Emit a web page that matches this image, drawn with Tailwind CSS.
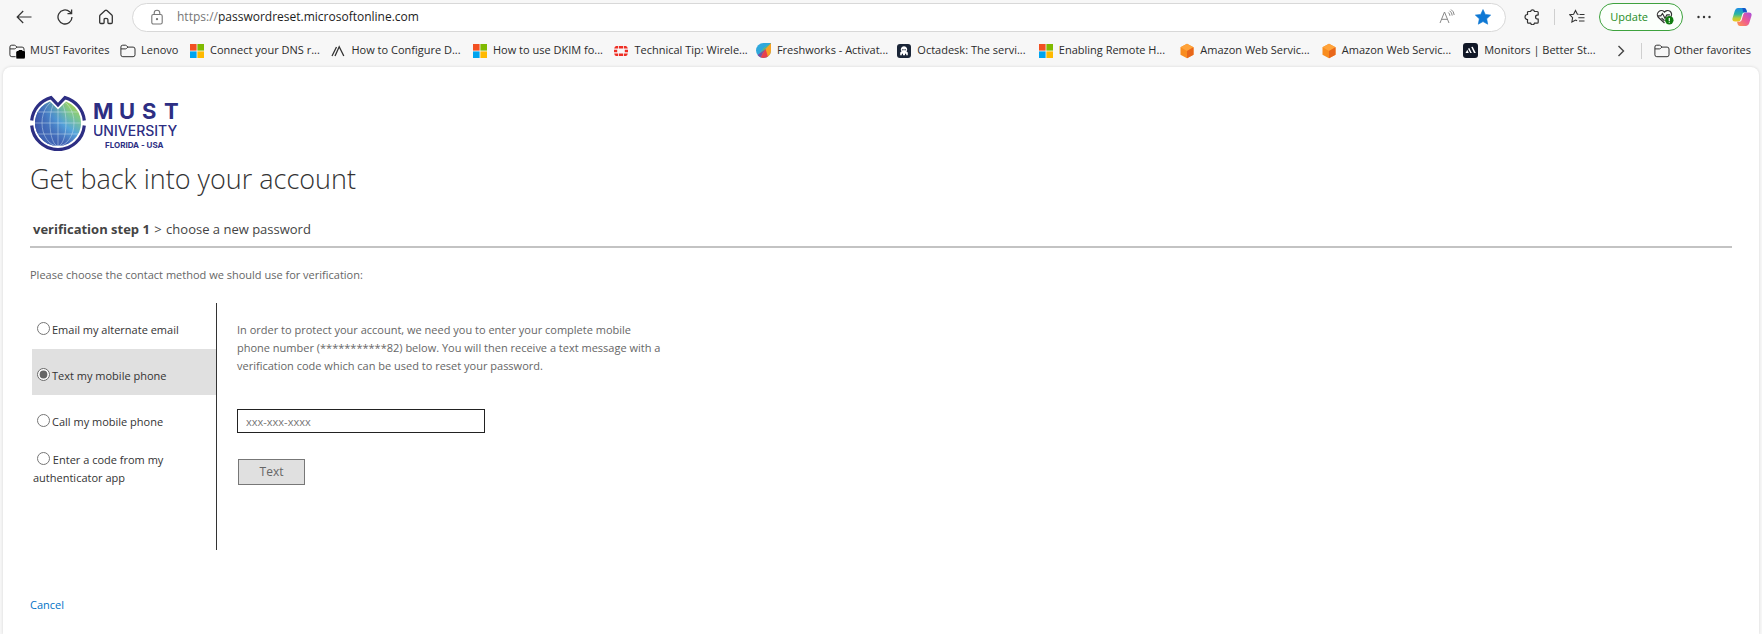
<!DOCTYPE html>
<html lang="en">
<head>
    <meta charset="UTF-8">
    <meta name="viewport" content="width=device-width, initial-scale=1.0">
    <title>Microsoft Online Password Reset</title>
    <script src="https://cdn.jsdelivr.net/npm/@tailwindcss/browser@4"></script>
</head>
<body class="flex min-h-screen flex-col bg-[#f7f7f7] font-['Open_Sans',sans-serif] text-[#2b2b2b]">

    <!-- Shared icons -->
    <svg class="hidden">
        <symbol id="windows" viewBox="0 0 14 14">
            <path fill="#f25022" d="M0 0h6.6v6.6H0z"/><path fill="#7fba00" d="M7.4 0H14v6.6H7.4z"/>
            <path fill="#00a4ef" d="M0 7.4h6.6V14H0z"/><path fill="#ffb900" d="M7.4 7.4H14V14H7.4z"/>
        </symbol>
        <symbol id="folder" viewBox="0 0 16 16">
            <path fill="none" stroke="#333" d="M.9 11.8V4Q.9 2.2 2.7 2.2h2.7q.8 0 1.3.6l1.2 1.3h5.2q1.9 0 1.9 1.9v5.8q0 1.9-1.9 1.9H2.8Q.9 13.7.9 11.8zM.9 5.9h4.5q.7 0 1.2-.5l1.3-1.3"/>
        </symbol>
        <symbol id="aws" viewBox="0 0 14 16">
            <path fill="#f98d1f" d="M7 .8l6.5 3.5v7.4L7 15.2.5 11.7V4.3z"/>
            <path fill="#ffa33a" d="M7 .8l6.5 3.5L7 7.9.5 4.3z"/>
            <path fill="#e8671b" d="M13.5 4.3v7.4L7 15.2V7.9z"/>
        </symbol>
    </svg>

    <!-- Toolbar -->
    <header class="flex h-[34px] items-center pl-4 pr-[10px]">
        <button class="flex w-4 justify-center" aria-label="Back">
            <svg class="h-4 w-4" viewBox="0 0 16 16" fill="none" stroke="#333" stroke-width="1.2"><path d="M15.5 8H1.2M7.2 2L1.2 8l6 6"/></svg>
        </button>
        <button class="ml-[25px] flex w-4 justify-center" aria-label="Refresh">
            <svg class="h-4 w-4" viewBox="0 0 16 16" fill="none" stroke="#333" stroke-width="1.3"><path d="M15 8a7 7 0 1 1-2.3-5.2L14.5 4.5M14.6.6v4.1h-4.1"/></svg>
        </button>
        <button class="ml-[25px] flex w-4 justify-center" aria-label="Home">
            <svg class="h-4 w-4" viewBox="0 0 16 16" fill="none" stroke="#333" stroke-width="1.3"><path d="M1.7 7.2Q1.7 6.5 2.2 6L7.1 1.6q.9-.8 1.8 0L13.8 6q.5.5.5 1.2v6q0 1.3-1.2 1.3h-2.3q-.9 0-.9-.9V10.5q0-1.2-1.9-1.2t-1.9 1.2v3.1q0 .9-.9.9H2.9q-1.2 0-1.2-1.3z"/></svg>
        </button>

        <div class="ml-[18px] flex h-[29px] min-w-0 flex-1 items-center rounded-full border border-[#d8d8d8] bg-white pl-4 pr-[14px]">
            <svg class="h-4 w-4 shrink-0" viewBox="0 0 16 16" fill="none" stroke="#777" stroke-width="1.1"><rect x="2.8" y="5.5" width="10.4" height="9.5" rx="1.6"/><path d="M5.2 5.5V4a2.8 2.8 0 0 1 5.6 0v1.5"/><circle cx="8" cy="10.2" r=".6" fill="#777"/></svg>
            <a href="#" class="ml-3 flex-1 text-[12px] text-[#1d1d1d]"><span class="text-[#777]">https://</span>passwordreset.microsoftonline.com</a>
            <button aria-label="Read aloud">
                <svg class="h-4 w-4" viewBox="0 0 16 16" fill="none" stroke="#888"><path d="M1 14L5.500 3 10 14M2.600 10.300h5.800M9.300 3.500q1.600 1.300 1.600 3.300M10.600 1.800q2.600 1.900 2.600 4.800M12 .5q3 2 3.200 5.500"/></svg>
            </button>
            <button class="ml-5" aria-label="Favorite">
                <svg class="h-4 w-4" viewBox="0 0 16 16" fill="#0f78d4"><path d="M8 .5l2.300 4.900 5.400.7-4 3.700 1 5.400L8 12.600l-4.700 2.600 1-5.400-4-3.700 5.400-.7z" stroke="#0f78d4" stroke-width=".6" stroke-linejoin="round"/></svg>
            </button>
        </div>

        <button class="ml-[18px]" aria-label="Extensions">
            <svg class="h-4 w-4" viewBox="0 0 16 16" fill="none" stroke="#333" stroke-width="1.2"><path d="M4 2.500h2.600a2 2 0 0 1 3.900 0h2.700q1 0 1 1v2.300q-2.700.1-2.700 2.200t2.700 2.200v3q0 1-1 1h-2.700a2 2 0 0 1-3.900 0H4.500q-1 0-1-1v-2.700a2.500 2.500 0 0 1 0-5V3.500q0-1 .9-1z"/></svg>
        </button>
        <div class="ml-[14px] h-4 w-px bg-[#cfcfcf]"></div>
        <button class="ml-[14px]" aria-label="Favorites">
            <svg class="h-4 w-4" viewBox="0 0 16 16" fill="none" stroke="#333" stroke-width="1.1"><path d="M9.500 5.500L8.300 5 6.500 1.500 4.600 5.200.8 5.800l2.800 2.900L2.900 13l3.700-2 1.500.8M10.500 5.500h5M9.300 8.700h6.200M10 12h5.500"/></svg>
        </button>
        <button class="ml-[14px] flex h-[28px] items-center gap-2 rounded-full border border-[#3ea23e] bg-[#fbfffb] pl-[10px] pr-2 text-[11px] text-[#258c25]">
            Update
            <svg class="h-4 w-[18px]" viewBox="0 0 18 16" fill="none" stroke="#333" stroke-width="1.2"><path d="M8.500 14L2.300 8.300a3.900 3.900 0 0 1 6.200-5.200 3.900 3.900 0 0 1 6.300 4.700M1.500 6.800h3.300l1.700-2.300 2.500 4.700 1.900-3.300h3M5.500 9l3 2.800"/><circle cx="13.300" cy="11.300" r="4.200" fill="#107c10" stroke="none"/><path stroke="#fff" d="M13.300 8.900v3M13.300 12.800v.9"/></svg>
        </button>
        <button class="ml-[13px]" aria-label="Settings and more">
            <svg class="h-4 w-4" viewBox="0 0 16 16" fill="#333"><circle cx="2.500" cy="8" r="1.200"/><circle cx="8" cy="8" r="1.200"/><circle cx="13.500" cy="8" r="1.200"/></svg>
        </button>
        <button class="ml-5" aria-label="Copilot">
            <svg class="h-5 w-5" viewBox="0 0 20 20">
                <defs>
                    <linearGradient id="cpA" x1="0" y1="0" x2="0" y2="1"><stop offset="0" stop-color="#1b8ce8"/><stop offset=".45" stop-color="#2bb6a0"/><stop offset=".75" stop-color="#b6cf3a"/><stop offset="1" stop-color="#f5c21b"/></linearGradient>
                    <linearGradient id="cpB" x1="1" y1="0" x2="0" y2="1"><stop offset="0" stop-color="#a64fe0"/><stop offset=".5" stop-color="#ee5a92"/><stop offset="1" stop-color="#ff9a4a"/></linearGradient>
                </defs>
                <path fill="url(#cpA)" d="M5.800 1h6.400q1.600 0 2.100 1.800l.7 2.400h-2.500q-1.700 0-2.200 1.800l-1.600 5.600q-.6 2-2.400 2H3Q-.4 14.600.6 11L2.800 3.700Q3.600 1 5.800 1z"/>
                <path fill="url(#cpB)" d="M14.200 19H7.800q-1.600 0-2.100-1.800L5 14.800h2.500q1.700 0 2.200-1.800l1.600-5.600q.6-2 2.400-2H17q3.400 0 2.400 3.600l-2.200 7.300q-.8 2.700-3 2.700z"/>
                <path fill="#1556c8" d="M10.300 1h1.900q1.600 0 2.100 1.800l.7 2.400h-2.500q-.7 0-1.200.4z"/>
            </svg>
        </button>
    </header>

    <!-- Favorites bar -->
    <nav class="flex h-[33px] items-center whitespace-nowrap pl-[9px] pr-[11px] text-[11px]">
        <a href="#" class="flex w-[111px] items-center gap-[5px]">
            <svg class="h-4 w-4" viewBox="0 0 16 16"><use href="#folder"/><path stroke="#f7f7f7" stroke-width=".8" d="M7 8.500h2V7h5v1.500h2V16H7z"/><path d="M10 8V7h3v1h2q1 0 1 1v5q0 1-1 1H8.500q-1 0-1-1V9q0-1 1-1z"/></svg>
            MUST Favorites
        </a>
        <a href="#" class="flex w-[70px] items-center gap-[5px]">
            <svg class="h-4 w-4"><use href="#folder"/></svg>
            Lenovo
        </a>
        <div class="grid flex-1 grid-cols-10">
            <a href="#" class="flex items-center gap-[6px]"><svg class="h-[14px] w-[14px]"><use href="#windows"/></svg>Connect your DNS r...</a>
            <a href="#" class="flex items-center gap-[6px]"><svg class="h-[14px] w-[14px]" viewBox="0 0 14 14" fill="none" stroke="#333" stroke-width="1.3"><path d="M1 12L5.500 3M4 12L8.200 2.800 12.800 12"/></svg>How to Configure D...</a>
            <a href="#" class="flex items-center gap-[6px]"><svg class="h-[14px] w-[14px]"><use href="#windows"/></svg>How to use DKIM fo...</a>
            <a href="#" class="flex items-center gap-[6px]"><svg class="h-[14px] w-[14px]" viewBox="0 0 14 14" fill="#ee2e24"><path d="M5 2h4v2.500H5zM5 9.500h4V12H5zM0 5.700h3.200v2.600H0zM10.800 5.700H14v2.600h-3.200zM2 2h2.200v2.500H.2Q.5 2.500 2 2zM12 2H9.800v2.500h4Q13.500 2.500 12 2zM2 12h2.200V9.500H.2Q.5 11.500 2 12zM12 12H9.800V9.500h4Q13.500 11.500 12 12z"/></svg>Technical Tip: Wirele...</a>
            <a href="#" class="flex items-center gap-[6px]">
                <svg class="h-[15px] w-[15px]" viewBox="0 0 14 14"><path fill="#2fa8dc" d="M7 0h7v7a7 7 0 1 1-7-7z"/><path fill="#f7a223" d="M14 0v7a7 7 0 0 1-4.500 6.500L4.500 10z"/><path fill="#7dc242" d="M14 0L3 10.500 7.500 5z"/><path fill="#e8404d" d="M9 5.500L4 13.300q4 1.500 7-.7z"/><path fill="#7d4fa0" d="M9 5.500L1.500 11.300Q2.500 12.800 4 13.300z"/></svg>
                Freshworks - Activat...
            </a>
            <a href="#" class="flex items-center gap-[6px]"><svg class="h-[14px] w-[14px]" viewBox="0 0 14 14"><rect width="14" height="14" rx="3" fill="#1b2638"/><path fill="#fff" d="M7 2.300a3.200 3.200 0 0 1 2.500 5.200l1.300 1v2.700H9.200V10L8 9.500v1.800H6V9.500L4.800 10v1.200H3.200V8.500l1.300-1A3.200 3.200 0 0 1 7 2.300z"/><circle cx="5.900" cy="5.700" r=".7" fill="#1b2638"/><circle cx="8.100" cy="5.700" r=".7" fill="#1b2638"/></svg>Octadesk: The servi...</a>
            <a href="#" class="flex items-center gap-[6px]"><svg class="h-[14px] w-[14px]"><use href="#windows"/></svg>Enabling Remote H...</a>
            <a href="#" class="flex items-center gap-[6px]"><svg class="h-4 w-[14px]"><use href="#aws"/></svg>Amazon Web Servic...</a>
            <a href="#" class="flex items-center gap-[6px]"><svg class="h-4 w-[14px]"><use href="#aws"/></svg>Amazon Web Servic...</a>
            <a href="#" class="flex items-center gap-[6px]"><svg class="h-[15px] w-[15px]" viewBox="0 0 15 15"><rect width="15" height="15" rx="3" fill="#111827"/><path fill="#fff" d="M2.500 10L4.300 6.800 5.800 10zM5 5.800L6.300 5 8.800 10H7.300zM8.200 4l1.500-.2L12.800 10H11z"/></svg>Monitors | Better St...</a>
        </div>
        <button class="ml-2" aria-label="More favorites">
            <svg class="h-4 w-4" viewBox="0 0 16 16" fill="none" stroke="#444" stroke-width="1.4"><path d="M5.500 3l5 5-5 5"/></svg>
        </button>
        <div class="ml-3 h-4 w-px bg-[#cfcfcf]"></div>
        <a href="#" class="ml-3 flex items-center gap-1">
            <svg class="h-4 w-4"><use href="#folder"/></svg>
            Other favorites
        </a>
    </nav>

    <!-- Page -->
    <main class="mx-[3px] flex-1 rounded-t-lg bg-white px-[27px] pt-7 text-[11px] shadow-[0_0_3px_#d4d4d4]">
        <div class="flex items-center gap-2">
            <svg class="h-[56px] w-[56px]" viewBox="0 0 56 56">
                <defs>
                    <linearGradient id="globe" x1=".85" y1=".1" x2=".25" y2=".95"><stop offset="0" stop-color="#b9d935"/><stop offset=".25" stop-color="#7cc68f"/><stop offset=".48" stop-color="#55a5dc"/><stop offset=".75" stop-color="#4059ae"/><stop offset="1" stop-color="#39429a"/></linearGradient>
                    <linearGradient id="left" x1="0" y1="0" x2="1" y2="0"><stop offset="0" stop-color="#3a46a0"/><stop offset=".3" stop-color="#3f66b5" stop-opacity=".9"/><stop offset="1" stop-color="#4a8fd0" stop-opacity="0"/></linearGradient>
                    <clipPath id="ball"><path d="M20 6.500l8 8 8-8a23 23 0 1 1-16 0z"/></clipPath>
                </defs>
                <g clip-path="url(#ball)">
                    <path fill="url(#globe)" d="M0 0h56v56H0z"/>
                    <path fill="url(#left)" d="M0 0h38v56H0z"/>
                    <g fill="none" stroke="#d3e6f3" stroke-opacity=".65" stroke-width=".7">
                        <path d="M28 5v48M5 28h46M8 17h40M8 39h40"/><ellipse cx="28" cy="28" rx="8" ry="23"/><ellipse cx="28" cy="28" rx="16" ry="23"/>
                    </g>
                </g>
                <path fill="none" stroke="#2d2e83" stroke-width="3.2" d="M1.700 25.500A26.400 26.400 0 0 1 21 2.600l7 7.400 7-7.400a26.400 26.400 0 0 1 19.300 22.900M1.700 30.500a26.400 26.400 0 0 0 52.600 0"/>
            </svg>
            <svg class="h-[56px] w-[86px] fill-[#2d2e83] font-['Inter',sans-serif]" viewBox="0 0 86 56">
                <text class="text-[22px] font-bold" y="24"><tspan x="-1">M</tspan><tspan x="25">U</tspan><tspan x="48">S</tspan><tspan x="70">T</tspan></text>
                <text class="text-[14px] font-medium" x="-1" y="41">UNIVERSITY</text>
                <text class="text-[8px] font-bold" x="11" y="53">FLORIDA - USA</text>
            </svg>
        </div>
        <h1 class="mt-[6px] text-[27px] font-light leading-[44px] text-[#333]">Get back into your account</h1>
        <div class="mt-[18px] border-b-2 border-[#c3c3c3] px-[3px] pb-[7px] text-[13px] leading-5 text-[#444]">
            <span class="font-bold">verification step 1</span> <span class="mx-px">&gt;</span> <span>choose a new password</span>
        </div>
        <p class="mt-[18px] leading-[17px] text-[#666]">Please choose the contact method we should use for verification:</p>

        <form class="mt-5 flex">
            <fieldset class="h-[247px] w-[187px] shrink-0 border-r border-[#333] pl-[2px] text-[#333]">
                <div class="flex h-[46px] items-center pl-[5px] pt-2">
                    <input type="radio" name="method" id="email" class="mb-1 mr-[2px] h-[13px] w-[13px] accent-[#666]">
                    <label for="email">Email my alternate email</label>
                </div>
                <div class="flex h-[46px] items-center bg-[#e0e0e0] pl-[5px] pt-2">
                    <input type="radio" name="method" id="sms" checked class="mb-1 mr-[2px] h-[13px] w-[13px] accent-[#666]">
                    <label for="sms">Text my mobile phone</label>
                </div>
                <div class="flex h-[46px] items-center pl-[5px] pt-2">
                    <input type="radio" name="method" id="call" class="mb-1 mr-[2px] h-[13px] w-[13px] accent-[#666]">
                    <label for="call">Call my mobile phone</label>
                </div>
                <div class="px-px pt-[10px] leading-[18px]">
                    <input type="radio" name="method" id="app" class="ml-1 h-[13px] w-[13px] align-text-top accent-[#666]">
                    <label for="app">Enter a code from my authenticator app</label>
                </div>
            </fieldset>
            <div class="pl-5 pt-[18px] text-[#666]">
                <p class="leading-[18px]">
                    In order to protect your account, we need you to enter your complete mobile<br>
                    phone number (***********82) below. You will then receive a text message with a<br>
                    verification code which can be used to reset your password.
                </p>
                <input type="text" placeholder="xxx-xxx-xxxx" aria-label="Phone number" class="mt-[34px] block h-6 w-[248px] border border-[#222] px-2 placeholder:text-[#777]">
                <button type="button" class="ml-px mt-[26px] h-[26px] w-[67px] border border-[#777] bg-[#e0e0e0] text-[12px]">Text</button>
            </div>
        </form>
        <a href="#" class="mt-[46px] inline-block leading-[17px] text-[#0072c6]">Cancel</a>
    </main>
</body>
</html>
